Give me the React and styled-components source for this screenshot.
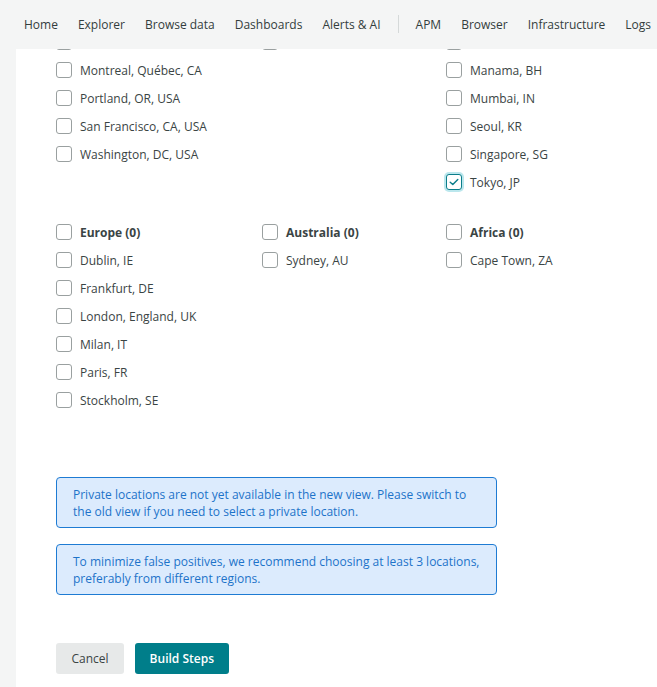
import React from "react";
import styled, { createGlobalStyle } from "styled-components";

const GlobalStyle = createGlobalStyle`
  html, body {
    margin: 0;
    padding: 0;
    background: #f4f5f5;
    font-family: "Open Sans", "Liberation Sans", sans-serif;
  }
  * { box-sizing: border-box; }
`;

const NavBar = styled.nav`
  position: fixed;
  top: 0;
  left: 0;
  right: 0;
  height: 49px;
  padding-bottom: 1px;
  background: #f4f5f5;
  display: flex;
  align-items: center;
  padding-left: 24px;
  gap: 20px;
  white-space: nowrap;
  overflow: hidden;
  z-index: 2;
`;

const NavItem = styled.span`
  font-size: 12px;
  color: #333d3d;
`;

const NavDivider = styled.span`
  width: 1px;
  height: 18px;
  background: #d5d9d9;
  margin: 0 -3px;
`;

const Page = styled.div`
  min-height: 687px;
  padding-left: 16px;
  overflow: hidden;
`;

const Panel = styled.main`
  background: #fff;
  min-height: 687px;
  padding: 28px 0 0 40px;
  display: flex;
  flex-direction: column;
`;

const Group = styled.section`
  display: grid;
  grid-template-columns: 206px 184px auto;
  margin-bottom: ${(p) => p.$gap || 0}px;
`;

const Column = styled.div`
  display: flex;
  flex-direction: column;
`;

const Row = styled.label`
  height: 28px;
  display: flex;
  align-items: center;
  gap: 8px;
  font-size: 12px;
  color: #3a4444;
  font-weight: ${(p) => (p.$bold ? 700 : 400)};
`;

const Box = styled.span`
  width: 16px;
  height: 16px;
  flex: none;
  border-radius: 3px;
  border: 1px solid ${(p) => (p.$checked ? "#0b7d8a" : "#9aa0a0")};
  box-shadow: ${(p) => (p.$checked ? "0 0 0 2px rgba(30, 175, 195, 0.3)" : "none")};
  display: flex;
  align-items: center;
  justify-content: center;
  background: #fff;
`;

const Notice = styled.div`
  width: 441px;
  background: #dcebfd;
  border: 1px solid #1e7bd3;
  border-radius: 4px;
  padding: 8px 16px 7px 16px;
  font-size: 12px;
  line-height: 17px;
  color: #1d73c9;
  margin-bottom: 16px;
`;

const Notices = styled.div`
  margin-top: 63px;
`;

const Actions = styled.div`
  display: flex;
  gap: 11px;
  margin-top: 32px;
`;

const Button = styled.button`
  height: 31px;
  border: none;
  border-radius: 3px;
  font-family: inherit;
  font-size: 12px;
  padding: 0 ${(p) => (p.$primary ? 14.5 : 15.5)}px;
  font-weight: ${(p) => (p.$primary ? 600 : 400)};
  background: ${(p) => (p.$primary ? "#007e8a" : "#e7e9e9")};
  color: ${(p) => (p.$primary ? "#fff" : "#3a4444")};
`;

function Check({ checked }) {
  return (
    <Box $checked={checked}>
      {checked && (
        <svg width="10" height="8" viewBox="0 0 10 8">
          <path d="M1.2 4.2 L3.8 6.6 L8.8 1.4" fill="none" stroke="#0b7d8a" strokeWidth="1.4" strokeLinecap="round" strokeLinejoin="round" />
        </svg>
      )}
    </Box>
  );
}

function Item({ label, bold, checked }) {
  return (
    <Row $bold={bold}>
      <Check checked={checked} />
      {label}
    </Row>
  );
}

const navItems = ["Home", "Explorer", "Browse data", "Dashboards", "Alerts & AI", "|", "APM", "Browser", "Infrastructure", "Logs"];

const firstGroup = [
  ["Columbus, OH, USA", "Montreal, Québec, CA", "Portland, OR, USA", "San Francisco, CA, USA", "Washington, DC, USA"],
  ["São Paulo, BR"],
  ["Hanoi, VN", "Manama, BH", "Mumbai, IN", "Seoul, KR", "Singapore, SG", "Tokyo, JP"],
];

const secondGroup = [
  ["Europe (0)", "Dublin, IE", "Frankfurt, DE", "London, England, UK", "Milan, IT", "Paris, FR", "Stockholm, SE"],
  ["Australia (0)", "Sydney, AU"],
  ["Africa (0)", "Cape Town, ZA"],
];

export default function App() {
  return (
    <>
      <GlobalStyle />
      <NavBar>
        {navItems.map((n, i) => (n === "|" ? <NavDivider key={i} /> : <NavItem key={i}>{n}</NavItem>))}
      </NavBar>
      <Page>
        <Panel>
          <Group $gap={22}>
            {firstGroup.map((col, i) => (
              <Column key={i}>
                {col.map((c) => (
                  <Item key={c} label={c} checked={c === "Tokyo, JP"} />
                ))}
              </Column>
            ))}
          </Group>
          <Group>
            {secondGroup.map((col, i) => (
              <Column key={i}>
                {col.map((c, j) => (
                  <Item key={c} label={c} bold={j === 0} />
                ))}
              </Column>
            ))}
          </Group>
          <Notices>
            <Notice>
              Private locations are not yet available in the new view. Please switch to the old view if you need to select a private location.
            </Notice>
            <Notice>
              To minimize false positives, we recommend choosing at least 3 locations, preferably from different regions.
            </Notice>
          </Notices>
          <Actions>
            <Button>Cancel</Button>
            <Button $primary>Build Steps</Button>
          </Actions>
        </Panel>
      </Page>
    </>
  );
}
